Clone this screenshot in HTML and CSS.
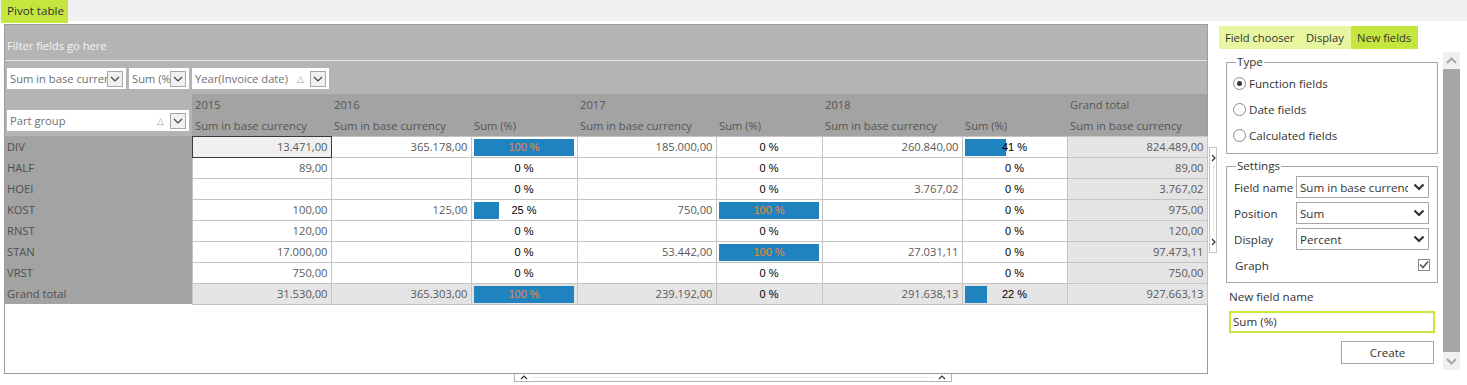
FILE: index.html
```html
<!DOCTYPE html>
<html lang="en">
<head>
  <meta charset="UTF-8" />
  <title>Pivot table</title>
  <link rel="stylesheet" href="styles.css">
</head>
<body>
  <div class="topbar">
    <div class="tab-main">Pivot table</div>
  </div>

  <div class="workspace">
    <div class="pivot-col">
      <div class="pivot">
        <div class="filter-zone">Filter fields go here</div>

        <!-- data fields -->
        <div class="data-zone">
          <div class="field-box fb-sum">
            <span class="fb-text">Sum in base currency</span>
            <span class="fb-btn"><svg width="10" height="6" viewBox="0 0 10 6"><polyline points="1,1 5,5 9,1" /></svg></span>
          </div>
          <div class="field-box fb-pct">
            <span class="fb-text">Sum (%)</span>
            <span class="fb-btn"><svg width="10" height="6" viewBox="0 0 10 6"><polyline points="1,1 5,5 9,1" /></svg></span>
          </div>
          <div class="field-box fb-year">
            <span class="fb-text">Year(Invoice date)</span>
            <span class="fb-sort">&#9651;</span>
            <span class="fb-btn"><svg width="10" height="6" viewBox="0 0 10 6"><polyline points="1,1 5,5 9,1" /></svg></span>
          </div>
        </div>

        <table class="grid">
          <colgroup>
            <col class="c-label">
            <col class="c-sum">
            <col class="c-sum2">
            <col class="c-pct">
            <col class="c-sum">
            <col class="c-pct">
            <col class="c-sum2">
            <col class="c-pct2">
            <col class="c-sum2">
          </colgroup>
          <thead>
            <tr>
              <th class="corner" rowspan="2">
                <div class="field-box fb-group">
                  <span class="fb-text">Part group</span>
                  <span class="fb-sort">&#9651;</span>
                  <span class="fb-btn"><svg width="10" height="6" viewBox="0 0 10 6"><polyline points="1,1 5,5 9,1" /></svg></span>
                </div>
              </th>
              <th>2015</th>
              <th colspan="2">2016</th>
              <th colspan="2">2017</th>
              <th colspan="2">2018</th>
              <th>Grand total</th>
            </tr>
            <tr>
              <th>Sum in base currency</th>
              <th>Sum in base currency</th>
              <th>Sum (%)</th>
              <th>Sum in base currency</th>
              <th>Sum (%)</th>
              <th>Sum in base currency</th>
              <th>Sum (%)</th>
              <th>Sum in base currency</th>
            </tr>
          </thead>
          <tbody>
            <tr>
              <td class="label">DIV</td>
              <td class="sel">13.471,00</td>
              <td>365.178,00</td>
              <td class="pct full"><span class="bar" style="width:100px"></span><span class="pct-text">100 %</span></td>
              <td>185.000,00</td>
              <td class="pct"><span class="pct-text">0 %</span></td>
              <td>260.840,00</td>
              <td class="pct"><span class="bar" style="width:41px"></span><span class="pct-text">41 %</span></td>
              <td class="gt">824.489,00</td>
            </tr>
            <tr>
              <td class="label">HALF</td>
              <td>89,00</td>
              <td></td>
              <td class="pct"><span class="pct-text">0 %</span></td>
              <td></td>
              <td class="pct"><span class="pct-text">0 %</span></td>
              <td></td>
              <td class="pct"><span class="pct-text">0 %</span></td>
              <td class="gt">89,00</td>
            </tr>
            <tr>
              <td class="label">HOEI</td>
              <td></td>
              <td></td>
              <td class="pct"><span class="pct-text">0 %</span></td>
              <td></td>
              <td class="pct"><span class="pct-text">0 %</span></td>
              <td>3.767,02</td>
              <td class="pct"><span class="pct-text">0 %</span></td>
              <td class="gt">3.767,02</td>
            </tr>
            <tr>
              <td class="label">KOST</td>
              <td>100,00</td>
              <td>125,00</td>
              <td class="pct"><span class="bar" style="width:25px"></span><span class="pct-text">25 %</span></td>
              <td>750,00</td>
              <td class="pct full"><span class="bar" style="width:100px"></span><span class="pct-text">100 %</span></td>
              <td></td>
              <td class="pct"><span class="pct-text">0 %</span></td>
              <td class="gt">975,00</td>
            </tr>
            <tr>
              <td class="label">RNST</td>
              <td>120,00</td>
              <td></td>
              <td class="pct"><span class="pct-text">0 %</span></td>
              <td></td>
              <td class="pct"><span class="pct-text">0 %</span></td>
              <td></td>
              <td class="pct"><span class="pct-text">0 %</span></td>
              <td class="gt">120,00</td>
            </tr>
            <tr>
              <td class="label">STAN</td>
              <td>17.000,00</td>
              <td></td>
              <td class="pct"><span class="pct-text">0 %</span></td>
              <td>53.442,00</td>
              <td class="pct full"><span class="bar" style="width:100px"></span><span class="pct-text">100 %</span></td>
              <td>27.031,11</td>
              <td class="pct"><span class="pct-text">0 %</span></td>
              <td class="gt">97.473,11</td>
            </tr>
            <tr>
              <td class="label">VRST</td>
              <td>750,00</td>
              <td></td>
              <td class="pct"><span class="pct-text">0 %</span></td>
              <td></td>
              <td class="pct"><span class="pct-text">0 %</span></td>
              <td></td>
              <td class="pct"><span class="pct-text">0 %</span></td>
              <td class="gt">750,00</td>
            </tr>
            <tr class="total">
              <td class="label">Grand total</td>
              <td>31.530,00</td>
              <td>365.303,00</td>
              <td class="pct full"><span class="bar" style="width:100px"></span><span class="pct-text">100 %</span></td>
              <td>239.192,00</td>
              <td class="pct"><span class="pct-text">0 %</span></td>
              <td>291.638,13</td>
              <td class="pct"><span class="bar" style="width:22px"></span><span class="pct-text">22 %</span></td>
              <td class="gt">927.663,13</td>
            </tr>
          </tbody>
        </table>
      </div>

      <!-- bottom splitter -->
      <div class="hsplit">
        <svg width="8" height="5" viewBox="0 0 8 5"><polyline points="1,4 4,1 7,4" /></svg>
        <span class="dots"></span>
        <svg width="8" height="5" viewBox="0 0 8 5"><polyline points="1,4 4,1 7,4" /></svg>
      </div>
    </div>

    <!-- side splitter -->
    <div class="vsplit">
      <svg width="5" height="8" viewBox="0 0 5 8"><polyline points="1,1 4,4 1,7" /></svg>
      <span class="dots"></span>
      <svg width="5" height="8" viewBox="0 0 5 8"><polyline points="1,1 4,4 1,7" /></svg>
    </div>

    <div class="side">
      <div class="side-tabs">
        <div class="stab t-chooser">Field chooser</div>
        <div class="stab t-display">Display</div>
        <div class="stab t-new active">New fields</div>
      </div>

      <div class="side-body">
        <div class="form">
          <fieldset class="group type-group">
            <legend>Type</legend>
            <div class="radio-row"><span class="radio on"></span>Function fields</div>
            <div class="radio-row"><span class="radio"></span>Date fields</div>
            <div class="radio-row"><span class="radio"></span>Calculated fields</div>
          </fieldset>

          <fieldset class="group settings-group">
            <legend>Settings</legend>
            <div class="set-row">
              <span class="set-label">Field name</span>
              <div class="select">
                <span class="select-text">Sum in base currency</span>
                <svg width="12" height="8" viewBox="0 0 12 8"><polyline points="1.5,1.5 6,6 10.5,1.5" /></svg>
              </div>
            </div>
            <div class="set-row">
              <span class="set-label">Position</span>
              <div class="select">
                <span class="select-text">Sum</span>
                <svg width="12" height="8" viewBox="0 0 12 8"><polyline points="1.5,1.5 6,6 10.5,1.5" /></svg>
              </div>
            </div>
            <div class="set-row">
              <span class="set-label">Display</span>
              <div class="select">
                <span class="select-text">Percent</span>
                <svg width="12" height="8" viewBox="0 0 12 8"><polyline points="1.5,1.5 6,6 10.5,1.5" /></svg>
              </div>
            </div>
            <div class="set-row">
              <span class="set-label graph-label">Graph</span>
              <span class="check"><svg width="10" height="10" viewBox="0 0 10 10"><polyline points="1,4.5 4,7.5 9,1.5" /></svg></span>
            </div>
          </fieldset>

          <div class="nf-label">New field name</div>
          <div class="nf-input">Sum (%)</div>
          <button class="create-btn">Create</button>
        </div>

        <div class="scrollbar">
          <div class="sb-btn"><svg width="11" height="7" viewBox="0 0 11 7"><polyline points="1,6 5.5,1.5 10,6" /></svg></div>
          <div class="sb-thumb"></div>
          <div class="sb-btn sb-down"><svg width="11" height="7" viewBox="0 0 11 7"><polyline points="1,1 5.5,5.5 10,1" /></svg></div>
        </div>
      </div>
    </div>
  </div>
</body>
</html>
```

FILE: styles.css
```css
* {
  box-sizing: border-box;
}

body {
  margin: 0;
  font-family: "Open Sans", "Noto Sans", sans-serif;
  font-size: 11.2px;
  color: #333;
  background: #fff;
}

/* top tab strip */
.topbar {
  height: 21px;
  background: #f0f0f0;
}

.tab-main {
  display: inline-block;
  margin-left: 1px;
  width: 67px;
  height: 23px;
  line-height: 22px;
  padding-left: 6px;
  background: #c5e63e;
  color: #333;
  font-size: 11.6px;
}

.workspace {
  display: flex;
  align-items: flex-start;
  padding-top: 3px;
}

.pivot-col {
  margin-left: 4px;
  width: 1204px;
}

.pivot {
  width: 1204px;
  height: 350px;
  border: 1px solid #9c9c9c;
  background: #fff;
}

.filter-zone {
  height: 36px;
  display: flex;
  align-items: center;
  padding: 6px 0 0 2px;
  background: #b4b4b4;
  border-bottom: 1px solid #e6e6e6;
  color: #f4f4f4;
}

.data-zone {
  height: 33px;
  display: flex;
  gap: 3px;
  padding: 7px 0 0 2px;
  background: #b4b4b4;
}

/* field chips */
.field-box {
  height: 21px;
  display: flex;
  align-items: center;
  padding: 0 3px;
  background: #fff;
  color: #707070;
  white-space: nowrap;
}

.fb-sum { width: 119px; }
.fb-pct { width: 60px; }
.fb-year { width: 137px; }
.fb-group { width: 182px; }

.fb-text {
  flex: 1;
  overflow: hidden;
}

.fb-sort {
  font-size: 9px;
  color: #9a9a9a;
  margin: 0 6px 0 4px;
}

.fb-btn {
  width: 16px;
  height: 16px;
  display: flex;
  align-items: center;
  justify-content: center;
  border: 1px solid #a8a8a8;
  background: #f0f0f0;
}

.fb-btn polyline {
  fill: none;
  stroke: #444;
  stroke-width: 1.2;
}

/* pivot grid */
.grid {
  width: 1202px;
  table-layout: fixed;
  border-collapse: collapse;
}

.c-label { width: 187px; }
.c-sum { width: 139px; }
.c-sum2 { width: 140px; }
.c-pct { width: 106px; }
.c-pct2 { width: 105px; }

.grid th {
  height: 21px;
  padding: 0 0 0 3px;
  background: #a3a3a3;
  color: #555;
  font-weight: normal;
  text-align: left;
  white-space: nowrap;
  overflow: hidden;
}

.grid th.corner {
  background: #b4b4b4;
  vertical-align: bottom;
  padding: 0 0 5px 2px;
}

.grid tbody tr {
  height: 21px;
}

.grid td {
  padding: 0 3px;
  border: 1px solid #c4c4c4;
  background: #fff;
  color: #5a5a5a;
  text-align: right;
  white-space: nowrap;
}

.grid td.label {
  border: none;
  background: #a3a3a3;
  color: #505050;
  text-align: left;
  padding-left: 2px;
}

.grid td.sel {
  border: 1px solid #3a3a3a;
  background: #f0f0f0;
}

.grid td.gt,
.grid tr.total td {
  background: #e4e4e4;
}

.grid tr.total td.label {
  background: #a3a3a3;
}

.grid td.pct {
  position: relative;
  padding: 0;
  text-align: center;
  color: #000;
  font-family: "Liberation Sans", sans-serif;
  font-size: 11px;
}

.bar {
  position: absolute;
  left: 2px;
  top: 2px;
  height: 17px;
  background: #1e83be;
}

.pct-text {
  position: relative;
}

.grid td.full {
  color: #f5862e;
}

/* splitters */
.hsplit {
  margin-left: 510px;
  width: 438px;
  height: 8px;
  display: flex;
  align-items: center;
  gap: 4px;
  padding: 0 5px;
  border: 1px solid #b4b4b4;
  border-top: none;
  background: #fff;
}

.hsplit .dots {
  flex: 1;
  border-top: 1px dotted #bcdde8;
}

.vsplit {
  margin: 123px 0 0 1px;
  width: 8px;
  height: 106px;
  display: flex;
  flex-direction: column;
  align-items: center;
  gap: 4px;
  padding: 6px 0;
  border: 1px solid #c4c4c4;
  background: #fff;
}

.vsplit .dots {
  flex: 1;
  border-left: 1px dotted #bcdde8;
}

.hsplit polyline,
.vsplit polyline {
  fill: none;
  stroke: #333;
  stroke-width: 1.2;
}

/* side panel */
.side {
  margin: 2px 0 0 2px;
}

.side-tabs {
  display: flex;
  height: 23px;
}

.stab {
  height: 23px;
  line-height: 23px;
  padding-left: 6px;
  background: #e8f6a2;
  color: #333;
  white-space: nowrap;
}

.t-chooser { width: 81px; }
.t-display { width: 51px; }
.t-new { width: 67px; }

.stab.active {
  background: #c5e63e;
}

.side-body {
  display: flex;
  align-items: flex-start;
}

.form {
  width: 224px;
  padding-top: 5px;
}

.group {
  width: 212px;
  margin: 0 0 0 7px;
  border: 1px solid #a6a6a6;
}

.group legend {
  margin-left: 3px;
  padding: 0 1px;
  line-height: 16px;
  font-size: 11.6px;
  color: #333;
}

.type-group {
  padding: 0 7px 5px 6px;
}

.settings-group {
  margin-top: 4px;
  padding: 0 7px 4px 6px;
}

.radio-row {
  height: 26px;
  display: flex;
  align-items: center;
  gap: 3px;
  font-size: 11.6px;
}

.radio {
  width: 13px;
  height: 13px;
  display: flex;
  align-items: center;
  justify-content: center;
  border: 1px solid #8a8a8a;
  border-radius: 50%;
  background: #fff;
}

.radio.on::after {
  content: "";
  width: 5px;
  height: 5px;
  border-radius: 50%;
  background: #333;
}

.set-row {
  height: 26px;
  display: flex;
  align-items: center;
  font-size: 11.6px;
}

.set-label {
  width: 63px;
  padding-left: 1px;
}

.select {
  width: 133px;
  height: 22px;
  display: flex;
  align-items: center;
  padding-left: 3px;
  border: 1px solid #a6a6a6;
  background: #fff;
  white-space: nowrap;
}

.select-text {
  flex: 1;
  overflow: hidden;
}

.select svg {
  margin: 0 3px 0 5px;
}

.select polyline {
  fill: none;
  stroke: #333;
  stroke-width: 2.2;
}

.graph-label {
  padding-left: 2px;
}

.check {
  margin-left: auto;
  width: 12px;
  height: 12px;
  display: flex;
  align-items: center;
  justify-content: center;
  border: 1px solid #8a8a8a;
  background: #fff;
}

.check polyline {
  fill: none;
  stroke: #555;
  stroke-width: 1.6;
}

.nf-label {
  margin: 6px 0 0 10px;
  line-height: 16px;
  font-size: 11.6px;
}

.nf-input {
  margin: 6px 0 0 10px;
  width: 206px;
  height: 22px;
  line-height: 18px;
  padding-left: 2px;
  border: 2px solid #c5e63e;
  font-size: 11.6px;
}

.create-btn {
  display: block;
  margin: 8px 0 0 122px;
  width: 93px;
  height: 23px;
  padding: 0;
  border: 1px solid #a6a6a6;
  background: #fff;
  color: #333;
  font-family: inherit;
  font-size: 11.6px;
}

.scrollbar {
  margin-top: 3px;
  width: 17px;
  height: 318px;
  display: flex;
  flex-direction: column;
  background: #a6a6a6;
}

.sb-btn {
  height: 17px;
  display: flex;
  align-items: center;
  justify-content: center;
  background: #f0f0f0;
}

.sb-down {
  height: 18px;
}

.sb-thumb {
  flex: 1;
}

.sb-btn polyline {
  fill: none;
  stroke: #a6a6a6;
  stroke-width: 2;
}
```
